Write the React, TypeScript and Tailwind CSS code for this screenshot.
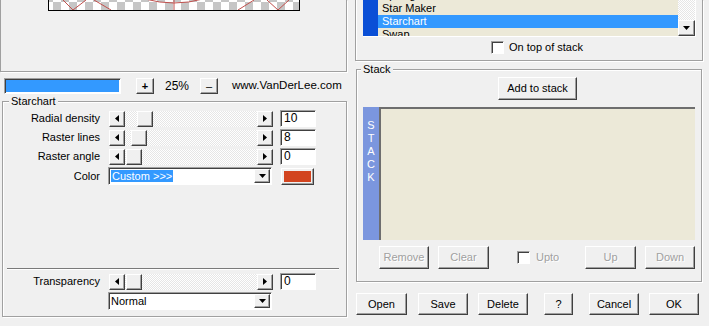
import React from 'react';

const raised =
  'bg-[#f0f0f0] border border-t-white border-l-white border-r-[#404040] border-b-[#404040] shadow-[inset_-1px_-1px_0_#a0a0a0]';
const sunken =
  'bg-white border border-t-[#a0a0a0] border-l-[#a0a0a0] border-r-white border-b-white shadow-[inset_1px_1px_0_#404040]';
const etched = 'border border-[#a0a0a0] shadow-[inset_1px_1px_0_#fff,1px_1px_0_#fff]';
const track = 'bg-[repeating-conic-gradient(#ffffff_0_25%,#e6e6e6_0_50%)] bg-[length:2px_2px]';

function Arrow({ dir }: { dir: 'left' | 'right' | 'down' }) {
  if (dir === 'left')
    return (
      <svg width="4" height="7" viewBox="0 0 4 7">
        <path d="M4 0 L0 3.5 L4 7 Z" fill="#000" />
      </svg>
    );
  if (dir === 'right')
    return (
      <svg width="4" height="7" viewBox="0 0 4 7">
        <path d="M0 0 L4 3.5 L0 7 Z" fill="#000" />
      </svg>
    );
  return (
    <svg width="7" height="4" viewBox="0 0 7 4">
      <path d="M0 0 L7 0 L3.5 4 Z" fill="#000" />
    </svg>
  );
}

function Slider({ thumb }: { thumb: string }) {
  return (
    <div className="flex h-[16px] w-[164px]">
      <div className={`${raised} w-[16px] h-[16px] flex items-center justify-center`}>
        <Arrow dir="left" />
      </div>
      <div className={`flex-1 h-[16px] ${track}`}>
        <div className={`${raised} w-[16px] h-[16px] ${thumb}`} />
      </div>
      <div className={`${raised} w-[16px] h-[16px] flex items-center justify-center`}>
        <Arrow dir="right" />
      </div>
    </div>
  );
}

function Edit({ value }: { value: string }) {
  return (
    <div className={`${sunken} w-[36px] h-[17px] pl-[3px] leading-[15px] text-[12px]`}>{value}</div>
  );
}

function Combo({ children }: { children: React.ReactNode }) {
  return (
    <div className={`${sunken} w-[164px] h-[18px] flex items-center pl-[2px] pr-[1px]`}>
      <div className="flex-1 leading-[14px]">{children}</div>
      <div className={`${raised} w-[16px] h-[14px] flex items-center justify-center`}>
        <Arrow dir="down" />
      </div>
    </div>
  );
}

function SliderRow({ label, thumb, value }: { label: string; thumb: string; value: string }) {
  return (
    <div className="flex items-center h-[17px]">
      <div className="w-[97px] text-right">{label}</div>
      <div className="ml-[9px]">
        <Slider thumb={thumb} />
      </div>
      <div className="ml-[7px]">
        <Edit value={value} />
      </div>
    </div>
  );
}

function Button({ label, w, disabled, className = '' }: { label: string; w: string; disabled?: boolean; className?: string }) {
  return (
    <div
      className={`${raised} ${w} h-full flex items-center justify-center ${
        disabled ? 'text-[#a0a0a0] [text-shadow:1px_1px_0_#fff]' : 'text-black'
      } ${className}`}
    >
      {label}
    </div>
  );
}

function Preview() {
  return (
    <svg width="250" height="10" viewBox="0 0 250 10" className="block">
      <defs>
        <pattern id="chk" width="16" height="16" patternUnits="userSpaceOnUse" x="-4" y="-6">
          <rect width="16" height="16" fill="#fff" />
          <rect width="8" height="8" fill="#c6c6c6" />
          <rect x="8" y="8" width="8" height="8" fill="#c6c6c6" />
        </pattern>
      </defs>
      <rect width="250" height="10" fill="url(#chk)" />
      <g stroke="#c0504d" strokeWidth="1" fill="none">
        <path d="M14 0 L24 10 L37 0" />
        <path d="M45 0 L62 10" />
        <path d="M218 0 L229 10 L240 0" />
        <path d="M189 10 L205 0" />
        <path d="M96 -1 Q 125 7 154 -1" />
        <path d="M125 0 L125 10" />
      </g>
    </svg>
  );
}

export default function App() {
  return (
    <div className="w-[709px] h-[326px] bg-[#f0f0f0] flex overflow-hidden font-['Liberation_Sans',Arial,sans-serif] text-[11px] text-black">
      {/* left column */}
      <div className="w-[355px] shrink-0 flex flex-col">
        <div className="w-[347px] h-[72px] border-x border-b border-[#a0a0a0] shadow-[1px_1px_0_#fff]">
          <div className="ml-[47px] w-[252px] h-[11px] border-x border-b border-black">
            <Preview />
          </div>
        </div>

        <div className="mt-[6px] h-[16px] flex items-center">
          <div className={`${sunken} ml-[4px] w-[117px] h-[16px] p-[1px]`}>
            <div className="w-full h-full bg-[#3399ff]" />
          </div>
          <div className="ml-[15px] h-[16px]">
            <Button label="+" w="w-[18px]" className="font-bold" />
          </div>
          <div className="w-[46px] text-center text-[12px]">25%</div>
          <div className="h-[16px]">
            <Button label="–" w="w-[18px]" />
          </div>
          <div className="ml-[14px] text-[11.5px]">www.VanDerLee.com</div>
        </div>

        <div className={`relative mt-[7px] ml-[2px] w-[345px] h-[216px] ${etched} flex flex-col`}>
          <div className="absolute -top-[8px] left-[6px] px-[2px] bg-[#f0f0f0] leading-[14px]">Starchart</div>
          <div className="pt-[8px] flex flex-col gap-[2px]">
            <SliderRow label="Radial density" thumb="ml-[12px]" value="10" />
            <SliderRow label="Raster lines" thumb="ml-[6px]" value="8" />
            <SliderRow label="Raster angle" thumb="ml-[1px]" value="0" />
            <div className="flex items-center h-[18px]">
              <div className="w-[97px] text-right">Color</div>
              <div className="ml-[8px]">
                <Combo>
                  <span className="bg-[#3399ff] text-white px-[1px]">Custom &gt;&gt;&gt;</span>
                </Combo>
              </div>
              <div className={`${raised} ml-[9px] w-[33px] h-[17px] p-[2px]`}>
                <div className="w-full h-full bg-[#d2441f]" />
              </div>
            </div>
          </div>
          <div className="mt-[83px] ml-[4px] w-[332px] h-[2px] border-t border-[#7a7a7a] border-b border-b-white" />
          <div className="mt-[3px]">
            <SliderRow label="Transparency" thumb="ml-[1px]" value="0" />
          </div>
          <div className="mt-[2px] ml-[105px]">
            <Combo>Normal</Combo>
          </div>
        </div>
      </div>

      {/* right column */}
      <div className="w-[348px] shrink-0 flex flex-col">
        <div className="w-[348px] h-[61px] border-x border-b border-[#a0a0a0] shadow-[inset_1px_0_0_#fff,1px_1px_0_#fff]">
          <div className="ml-[7px] w-[333px] h-[37px] flex border-r border-b border-r-white border-b-white overflow-hidden">
            <div className="w-[15px] bg-[#0a4fd6]" />
            <div className="flex-1 bg-[#ece9d8] overflow-hidden">
              <div className="-mt-[11px] leading-[13px]">
                <div className="h-[13px] pl-[4px]">Spotlight</div>
                <div className="h-[13px] pl-[4px]">Star Maker</div>
                <div className="h-[13px] pl-[4px] bg-[#3399ff] text-white">Starchart</div>
                <div className="h-[13px] pl-[4px]">Swap</div>
              </div>
            </div>
            <div className={`w-[17px] flex flex-col justify-end ${track}`}>
              <div className={`${raised} w-[17px] h-[16px] flex items-center justify-center`}>
                <Arrow dir="down" />
              </div>
            </div>
          </div>
          <div className="mt-[4px] ml-[135px] flex items-center h-[13px]">
            <div className={`${sunken} w-[13px] h-[13px]`} />
            <div className="ml-[5px]">On top of stack</div>
          </div>
        </div>

        <div className={`relative mt-[8px] ml-[1px] w-[346px] h-[213px] ${etched} flex flex-col`}>
          <div className="absolute -top-[8px] left-[4px] px-[2px] bg-[#f0f0f0] leading-[14px]">Stack</div>
          <div className="mt-[7px] ml-[141px] h-[23px]">
            <Button label="Add to stack" w="w-[79px]" />
          </div>
          <div className="mt-[7px] ml-[6px] w-[332px] h-[133px] flex">
            <div className="w-[16px] bg-[#7b96de] flex flex-col items-center pt-[12px] text-white text-[11px] leading-[13px]">
              <span>S</span>
              <span>T</span>
              <span>A</span>
              <span>C</span>
              <span>K</span>
            </div>
            <div className="flex-1 bg-[#ece9d8] border-t-2 border-l-2 border-t-[#6e6e6e] border-l-[#6e6e6e]" />
          </div>
          <div className="mt-[6px] h-[23px] flex">
            <div className="ml-[22px] h-full">
              <Button label="Remove" w="w-[50px]" disabled />
            </div>
            <div className="ml-[9px] h-full">
              <Button label="Clear" w="w-[51px]" disabled />
            </div>
            <div className="w-[96px] pl-[28px] flex items-center">
              <div className={`${sunken} w-[13px] h-[13px] bg-[#f0f0f0]`} />
              <div className="ml-[6px] text-[#a0a0a0] [text-shadow:1px_1px_0_#fff]">Upto</div>
            </div>
            <div className="h-full">
              <Button label="Up" w="w-[51px]" disabled />
            </div>
            <div className="ml-[9px] h-full">
              <Button label="Down" w="w-[50px]" disabled />
            </div>
          </div>
        </div>

        <div className="mt-[11px] h-[22px] flex">
          <div className="ml-[1px] h-full">
            <Button label="Open" w="w-[51px]" />
          </div>
          <div className="ml-[11px] h-full">
            <Button label="Save" w="w-[50px]" />
          </div>
          <div className="ml-[10px] h-full">
            <Button label="Delete" w="w-[50px]" />
          </div>
          <div className="ml-[16px] h-full">
            <Button label="?" w="w-[29px]" />
          </div>
          <div className="ml-[16px] h-full">
            <Button label="Cancel" w="w-[50px]" />
          </div>
          <div className="ml-[10px] h-full">
            <Button label="OK" w="w-[50px]" />
          </div>
        </div>
      </div>
    </div>
  );
}
